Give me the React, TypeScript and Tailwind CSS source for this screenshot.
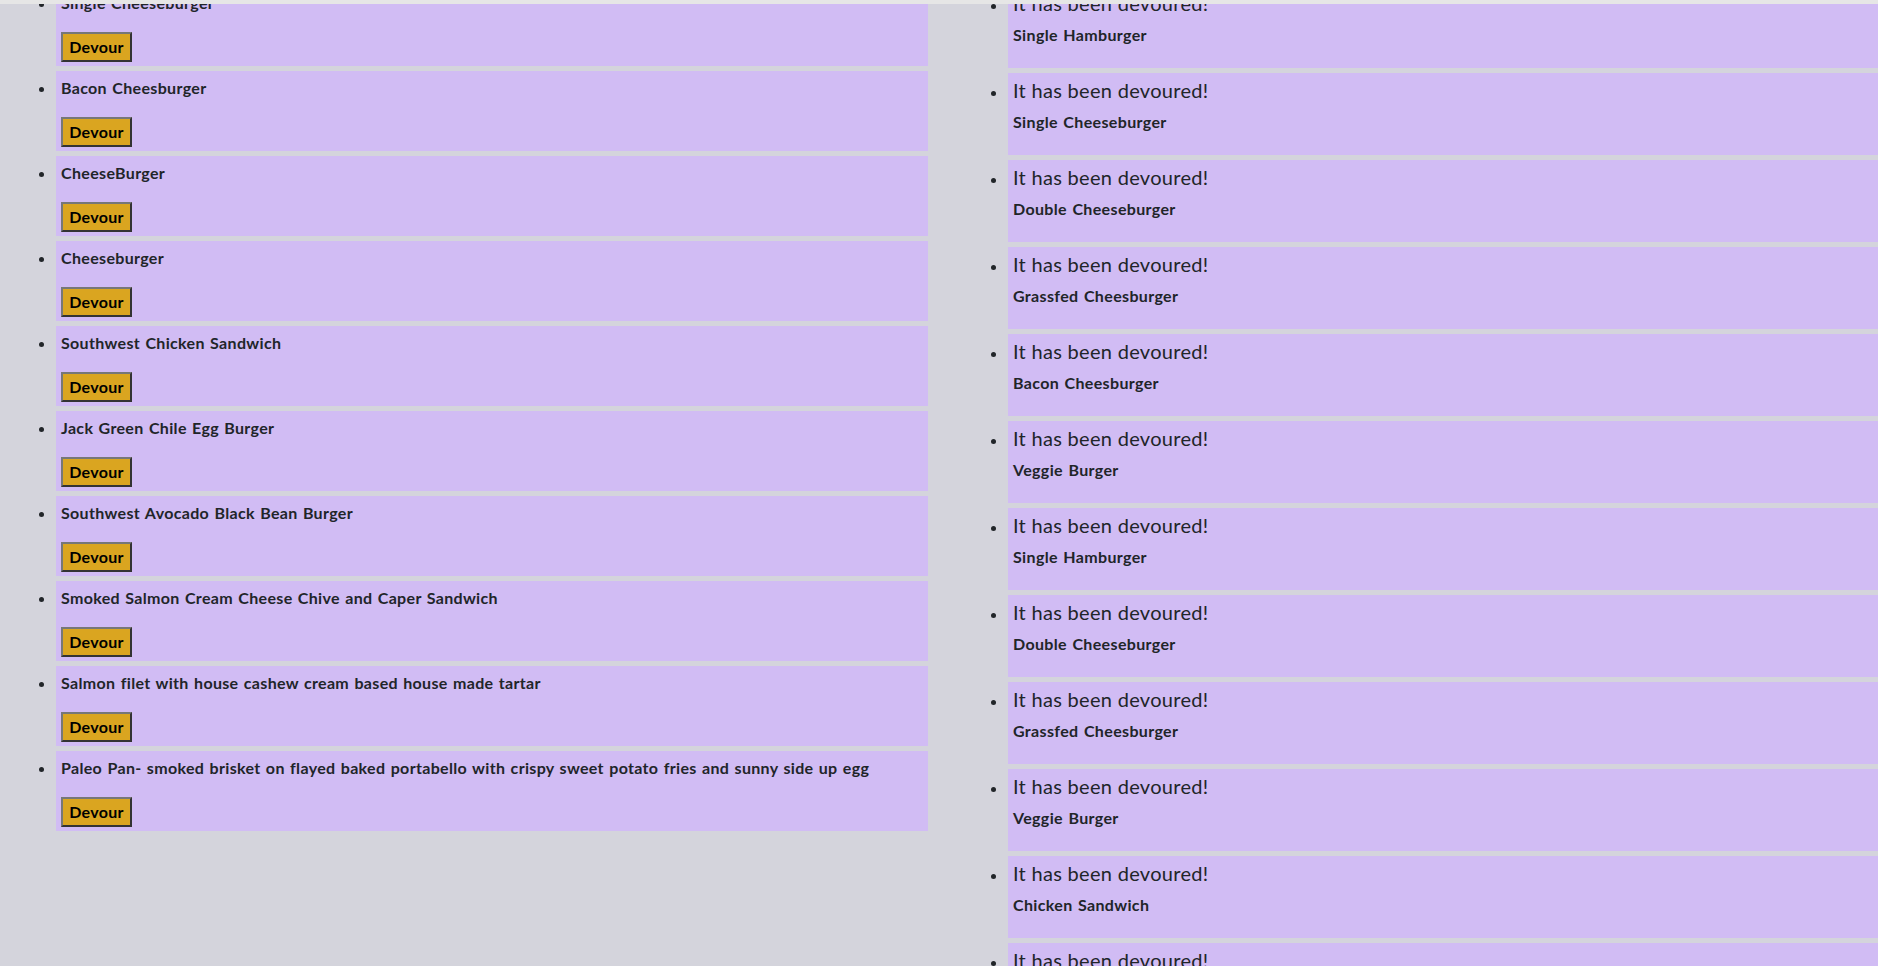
import React from "react";

const MENU = [
  "Single Cheeseburger",
  "Bacon Cheesburger",
  "CheeseBurger",
  "Cheeseburger",
  "Southwest Chicken Sandwich",
  "Jack Green Chile Egg Burger",
  "Southwest Avocado Black Bean Burger",
  "Smoked Salmon Cream Cheese Chive and Caper Sandwich",
  "Salmon filet with house cashew cream based house made tartar",
  "Paleo Pan- smoked brisket on flayed baked portabello with crispy sweet potato fries and sunny side up egg",
];

const DEVOURED = [
  "Single Hamburger",
  "Single Cheeseburger",
  "Double Cheeseburger",
  "Grassfed Cheesburger",
  "Bacon Cheesburger",
  "Veggie Burger",
  "Single Hamburger",
  "Double Cheeseburger",
  "Grassfed Cheesburger",
  "Veggie Burger",
  "Chicken Sandwich",
  "Bacon Cheesburger",
];

export default function App() {
  return (
    <div className="relative h-[966px] overflow-hidden bg-[#d4d4dc] text-[#212529] font-['Lato',sans-serif]">
      {/* thin bar across the top */}
      <div className="absolute top-0 inset-x-0 h-[4px] bg-[#e6e6e6] z-10" />

      <div className="flex -mt-[14px]">
        {/* ── Burgers to eat ── */}
        <ul className="ml-4 w-[912px] shrink-0 pl-10 list-disc">
          {MENU.map((name, i) => (
            <li
              key={i}
              className="h-[80px] mb-[5px] bg-[#d1bcf4] pt-[5px] px-[5px] pb-[5px]"
            >
              <p className="text-[16px] leading-[21px] font-bold tracking-[0.33px] [word-spacing:1.1px] mb-[19px]">
                {name}
              </p>
              <button className="h-[30px] w-[71px] bg-[#daa520] text-black text-[16px] font-bold tracking-[0.3px] border-2 border-t-[#777] border-l-[#777] border-b-[#333] border-r-[#333]">
                Devour
              </button>
            </li>
          ))}
        </ul>

        {/* ── Already devoured ── */}
        <ul className="ml-10 w-[1000px] shrink-0 pl-10 list-disc">
          {DEVOURED.map((name, i) => (
            <li key={i} className="h-[82px] mb-[5px] bg-[#d1bcf4] p-[5px]">
              <div className="text-[20px] leading-[24px] tracking-[0.3px]">It has been devoured!</div>
              <p className="mt-[10px] text-[16px] leading-[20px] font-bold tracking-[0.35px] [word-spacing:1.2px]">
                {name}
              </p>
            </li>
          ))}
        </ul>
      </div>
    </div>
  );
}
